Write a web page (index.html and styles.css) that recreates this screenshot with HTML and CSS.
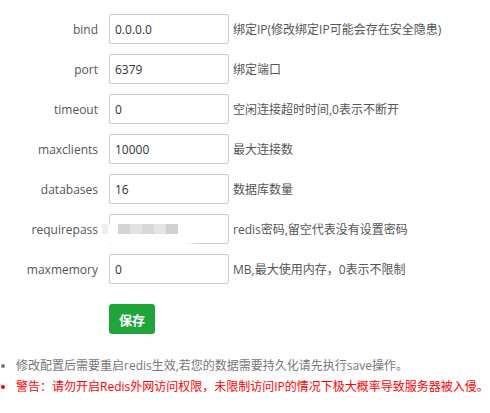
FILE: index.html
```html
<!DOCTYPE html>
<html>
<head>
<meta charset="utf-8">
<link rel="stylesheet" href="styles.css">
</head>
<body>
<div class="form">
  <div class="row"><span class="label">bind</span><input class="field" type="text" value="0.0.0.0"><span class="note">绑定IP(修改绑定IP可能会存在安全隐患)</span></div>
  <div class="row"><span class="label">port</span><input class="field" type="text" value="6379"><span class="note">绑定端口</span></div>
  <div class="row"><span class="label">timeout</span><input class="field" type="text" value="0"><span class="note">空闲连接超时时间,0表示不断开</span></div>
  <div class="row"><span class="label">maxclients</span><input class="field" type="text" value="10000"><span class="note">最大连接数</span></div>
  <div class="row"><span class="label">databases</span><input class="field" type="text" value="16"><span class="note">数据库数量</span></div>
  <div class="row"><span class="label">requirepass</span>
    <span class="masked">
      <input class="field" type="text" value="">
      <span class="blur"></span>
      <span class="blocks"><i class="b1"></i><i class="b2"></i><i class="b3"></i><i class="b4"></i><i class="b5"></i><i class="b6"></i></span>
    </span>
    <span class="note">redis密码,留空代表没有设置密码</span></div>
  <div class="row"><span class="label">maxmemory</span><input class="field" type="text" value="0"><span class="note">MB,最大使用内存，0表示不限制</span></div>
  <div class="actions"><button class="save">保存</button></div>
</div>
<ul class="tips">
  <li>修改配置后需要重启redis生效,若您的数据需要持久化请先执行save操作。</li>
  <li class="warn">警告：请勿开启Redis外网访问权限，未限制访问IP的情况下极大概率导致服务器被入侵。</li>
</ul>
</body>
</html>
```
FILE: styles.css
```css
html, body {
  margin: 0;
  padding: 0;
  background: #fff;
}
body {
  font-family: "Open Sans", "Noto Sans CJK SC", sans-serif;
  font-size: 12px;
  color: #555;
}
.form {
  padding-top: 14px;
}
.row {
  display: flex;
  align-items: center;
  height: 30px;
  margin-bottom: 10px;
}
.label {
  width: 98px;
  text-align: right;
  margin-right: 11px;
  color: #555;
}
.field {
  box-sizing: border-box;
  width: 120px;
  height: 30px;
  border: 1px solid #ccc;
  border-radius: 2px;
  padding: 0 5px;
  font-family: "Open Sans", "Noto Sans CJK SC", sans-serif;
  font-size: 12px;
  color: #333;
  outline: none;
  margin: 0;
}
.note {
  margin-left: 4px;
  color: #555;
}
.masked {
  position: relative;
  display: block;
  width: 120px;
  height: 30px;
}
.blur {
  position: absolute;
  left: -7px;
  top: 7px;
  width: 96px;
  height: 27px;
  background: #fff;
  border-radius: 50%;
  box-shadow: 0 0 4px 3px #fff;
}
.blocks {
  position: absolute;
  left: -7px;
  top: 10px;
  display: flex;
  height: 10px;
}
.blocks i {
  display: block;
  height: 10px;
  width: 12px;
}
.blocks .b1 { width: 6px; background: #eee; margin-right: 10px; }
.blocks .b2 { background: #d4d4d4; }
.blocks .b3 { background: #e2e2e2; }
.blocks .b4 { background: #d8d8d8; }
.blocks .b5 { background: #e4e4e4; }
.blocks .b6 { background: #d0d0d0; }
.actions {
  padding-left: 109px;
  margin-top: 20px;
}
.save {
  width: 46px;
  height: 30px;
  border: none;
  border-radius: 3px;
  background: #20a53a;
  color: #fff;
  font-family: "Open Sans", "Noto Sans CJK SC", sans-serif;
  font-size: 13px;
  font-weight: bold;
  padding: 0;
}
.tips {
  margin: 21px 0 0 0;
  padding-left: 16px;
  color: #777;
}
.tips li {
  line-height: 21px;
}
.tips .warn {
  color: #f00;
}
```
